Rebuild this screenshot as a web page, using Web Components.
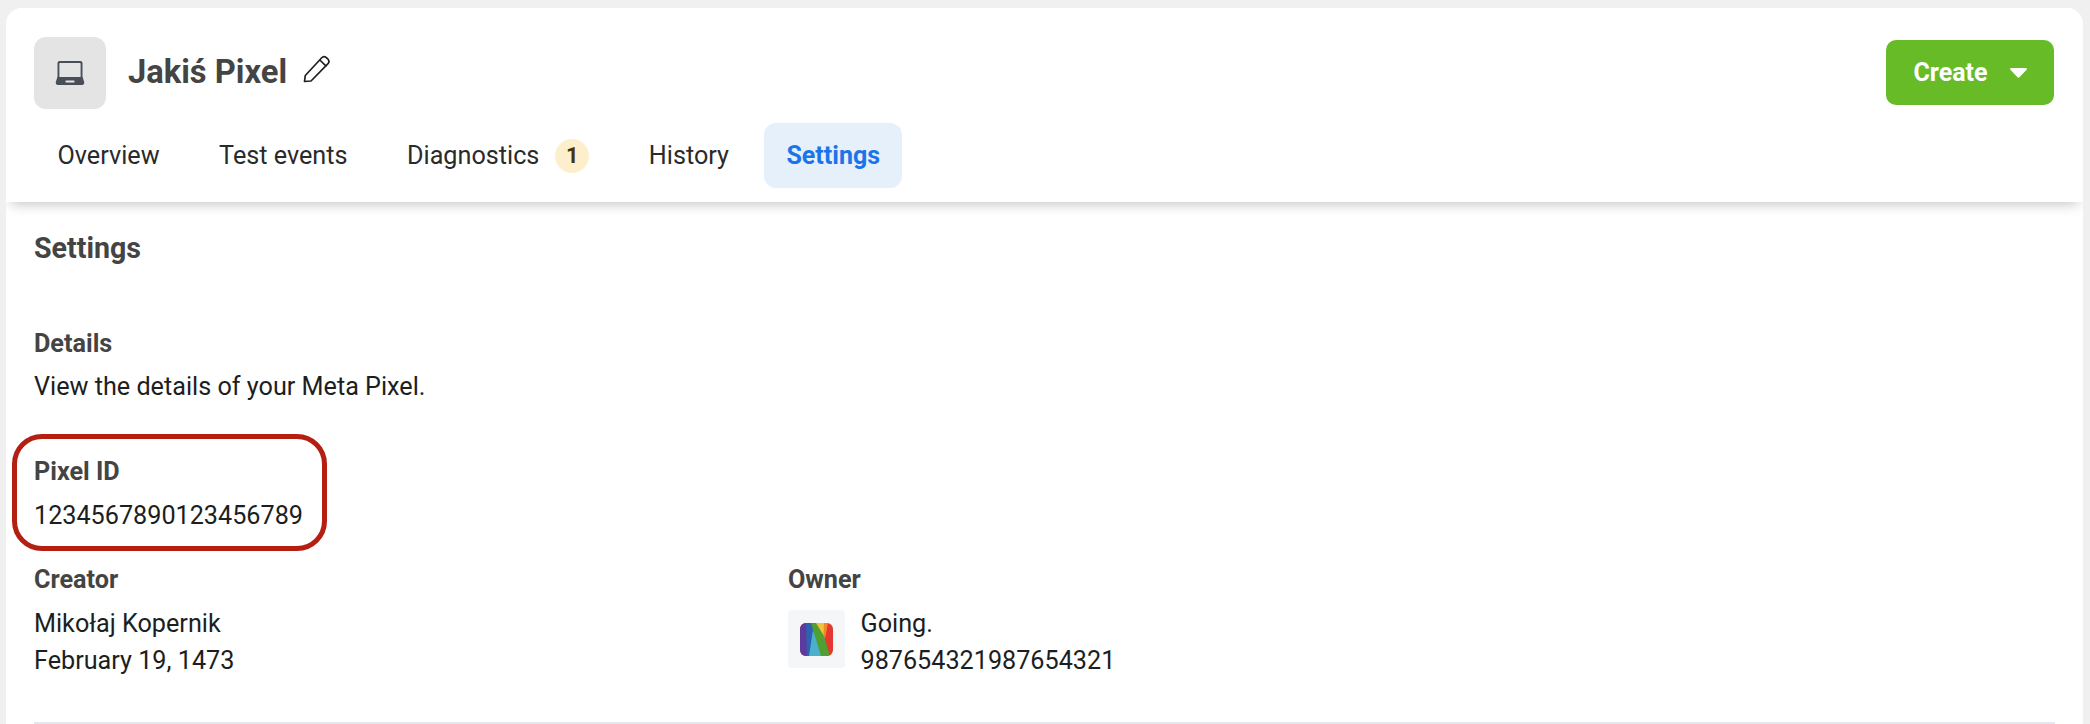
<!DOCTYPE html>
<html>
<head>
<meta charset="utf-8">
<title>Pixel settings</title>
<style>
html, body { margin: 0; padding: 0; background: #f0f0f0; height: 724px; overflow: hidden; }
body { font-family: Roboto, "Liberation Sans", sans-serif; color: #1c1e21; }
</style>
</head>
<body>
<pixel-page>
  <pixel-header slot="header" name="Jakiś Pixel">
    <pixel-tab>Overview</pixel-tab>
    <pixel-tab>Test events</pixel-tab>
    <pixel-tab badge="1">Diagnostics</pixel-tab>
    <pixel-tab>History</pixel-tab>
    <pixel-tab active>Settings</pixel-tab>
  </pixel-header>
  <pixel-settings></pixel-settings>
</pixel-page>
<script>
(function () {
'use strict';

function shadow(el, html) {
    let root = el.attachShadow({ mode: 'open' });
    root.innerHTML = html;
    return root;
}

class PixelPage extends HTMLElement {
    constructor() {
        super();
        shadow(this, `<style>
:host{
  display: block;
  box-sizing: border-box;
  margin: 8px 7px 0 6px;
  height: 716px;
  background: #fff;
  border-radius: 16px 16px 0 0;
  overflow: hidden;
}
</style>
<slot name="header"></slot>
<slot></slot>`);
    }
}

class PixelHeader extends HTMLElement {
    constructor() {
        super();
        shadow(this, `<style>
:host{
  display: block;
  position: relative;
  box-sizing: border-box;
  height: 194px;
  padding: 29px 28px 0;
  background: #fff;
  box-shadow: 0 7px 12px -5px rgba(0,0,0,.24);
}
.top{ display: flex; align-items: center; height: 72px; }
.thumb{
  width: 72px; height: 72px;
  display: flex; align-items: center; justify-content: center;
  background: #e4e4e4;
  border-radius: 12px;
}
h1{
  margin: 0 0 0 22px;
  font-size: 32.700px;
  line-height: 36px;
  font-weight: 700;
  color: #444;
  position: relative;
  top: -1px;
}
.pen{ margin: -9px 0 0 16px; display: block; }
.create{
  margin-left: auto;
  margin-top: -1px;
  margin-right: 1px;
  box-sizing: border-box;
  width: 168px; height: 65px;
  display: flex; align-items: center; justify-content: center; gap: 22px;
  background: #67bb26;
  border-radius: 10px;
  color: #fff;
  font-size: 25px;
  font-weight: 700;
}
.tabs{ display: flex; align-items: center; gap: 13.500px; margin-top: 14px; margin-left: .5px; }
</style>
<div class="top">
  <div class="thumb">
    <svg width="30" height="24" viewBox="0 0 30 24">
      <path d="M2.500 2.200C2.500 .9 3.400 0 4.700 0h20.600c1.300 0 2.200.9 2.200 2.200V17h-1.900V2.600c0-.5-.2-.7-.7-.7H5.100c-.5 0-.7.2-.7.7V17H2.500z" fill="#484f59"/>
      <path d="M2.500 16h25l1.600 4.500c.5 1.400-.2 3.500-1.900 3.500H2.800C1.100 24 .4 21.900.9 20.500z" fill="#484f59"/>
      <rect x="10.500" y="19.500" width="9" height="2" rx=".4" fill="#e4e4e4"/>
    </svg>
  </div>
  <h1></h1>
  <svg class="pen" width="27" height="28" viewBox="0 0 27 28" fill="none" stroke="#1f1f1f" stroke-width="1.700" stroke-linejoin="round">
    <path d="M1.500 26.500 L2.300 20.500 L18.500 3 C20 1.400 21.500 1.200 23.300 2.600 L25 4.200 C26.400 5.800 26.300 7.300 24.800 8.800 L8 26 Z"/>
    <path d="M16.800 5 L23.400 11.400"/>
  </svg>
  <div class="create">Create<svg width="17" height="10" viewBox="0 0 17 10"><path d="M1.200 0h14.600c1 0 1.500 1 .8 1.700L9.500 9.300c-.6.600-1.400.6-2 0L.4 1.700C-.3 1 .2 0 1.200 0z" fill="#fff"/></svg></div>
</div>
<div class="tabs"><slot></slot></div>`);
        this.shadowRoot.querySelector('h1').textContent = this.getAttribute('name');
    }
}

class PixelTab extends HTMLElement {
    constructor() {
        super();
        let badge = this.getAttribute('badge');
        shadow(this, `<style>
:host{
  display: flex; align-items: center;
  box-sizing: border-box;
  height: 65px;
  padding: 0 23px;
  border-radius: 12px;
  font-size: 25.200px;
  color: #2a2a2a;
  white-space: nowrap;
}
:host([active]){
  margin-left: -1px;
  padding: 0 22px;
  background: #e6f0fb;
  color: #1b74e8;
  font-size: 25px;
  font-weight: 700;
}
.badge{
  display: flex; align-items: center; justify-content: center;
  width: 34px; height: 34px;
  margin-left: 16px;
  border-radius: 50%;
  background: #fdefcb;
  color: #4a3308;
  font-size: 22px;
  font-weight: 700;
}
</style><slot></slot>${badge ? `<span class="badge">${badge}</span>` : ''}`);
    }
}

class PixelField extends HTMLElement {
    constructor() {
        super();
        shadow(this, `<style>
:host{ display: block; font-size: 25.200px; line-height: 37px; color: #1c1e21; }
.label{ font-weight: 700; color: #444; line-height: 28px; margin-bottom: 11px; }
</style>
<div class="label"></div>
<slot></slot>`);
        this.shadowRoot.querySelector('.label').textContent = this.getAttribute('label');
    }
}

class OwnerLogo extends HTMLElement {
    constructor() {
        super();
        shadow(this, `<style>
:host{
  display: flex; align-items: center; justify-content: center;
  width: 57px; height: 58px;
  flex: none;
  margin-top: 5px;
  background: #f5f6f7;
  border-radius: 4px;
}
</style>
<svg width="33" height="33" viewBox="0 0 33 33">
  <clipPath id="c"><rect width="33" height="33" rx="6"/></clipPath>
  <g clip-path="url(#c)">
    <rect width="33" height="33" fill="#e5382e"/>
    <path d="M0 0H8L9 33H0z" fill="#5b3c9e"/>
    <path d="M6 0H13L15 9L10 33H7z" fill="#2e62b0"/>
    <path d="M13 7L23 33H9z" fill="#4bb0cb"/>
    <path d="M11 0H20L30 33H21z" fill="#4f9f33"/>
    <path d="M16 0H25L24 13z" fill="#f3c13a"/>
    <path d="M24 0H28L25 16L23.500 11z" fill="#ee8a2c"/>
  </g>
</svg>`);
    }
}

class PixelSettings extends HTMLElement {
    constructor() {
        super();
        shadow(this, `<style>
:host{
  display: block;
  position: relative;
  padding: 28px 28px 0;
  font-size: 25.200px;
  color: #1c1e21;
}
h2{ margin: 0; font-size: 28.600px; line-height: 36px; font-weight: 700; color: #444; }
h3{ margin: 64px 0 0; font-size: 25.200px; line-height: 28px; font-weight: 700; color: #444; }
p{ margin: 15px 0 0; line-height: 28px; }
.pixel{ margin-top: 57px; }
.row{ display: grid; grid-template-columns: 754px 1fr; margin-top: 32px; }
.owner{ display: flex; gap: 15.500px; align-items: flex-start; }
hr{ margin: 43px 0 0; border: 0; border-top: 2px solid #e6e6ee; }
.mark{
  position: absolute;
  left: 6px; top: 232px;
  width: 315px; height: 117px;
  box-sizing: border-box;
  border: 5px solid #b41f12;
  border-radius: 30px;
}
</style>
<h2>Settings</h2>
<h3>Details</h3>
<p>View the details of your Meta Pixel.</p>
<pixel-field class="pixel" label="Pixel ID">1234567890123456789</pixel-field>
<div class="row">
  <pixel-field label="Creator">Mikołaj Kopernik<br>February 19, 1473</pixel-field>
  <pixel-field label="Owner"><div class="owner"><owner-logo></owner-logo><div>Going.<br>987654321987654321</div></div></pixel-field>
</div>
<hr>
<div class="mark"></div>`);
    }
}

customElements.define('pixel-page', PixelPage);
customElements.define('pixel-header', PixelHeader);
customElements.define('pixel-tab', PixelTab);
customElements.define('pixel-field', PixelField);
customElements.define('owner-logo', OwnerLogo);
customElements.define('pixel-settings', PixelSettings);

}());
</script>
</body>
</html>
